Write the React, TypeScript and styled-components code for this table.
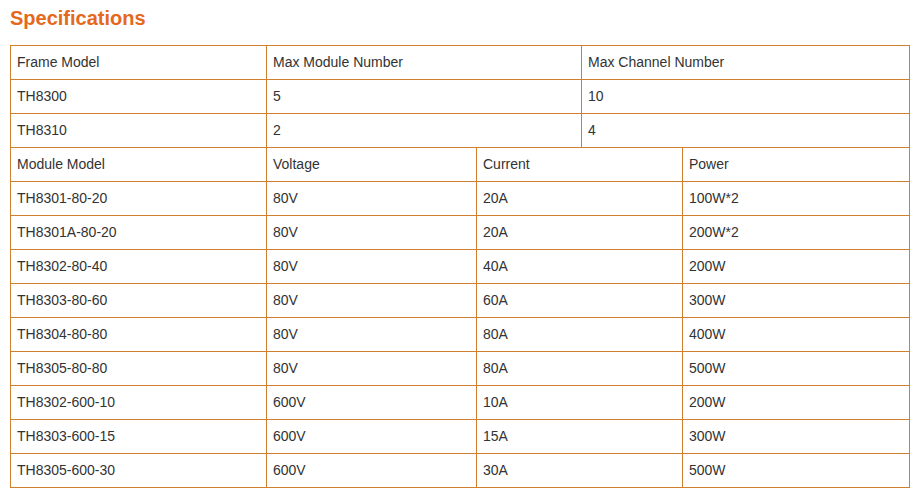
import styled, { createGlobalStyle } from 'styled-components';

const GlobalStyle = createGlobalStyle`
  body {
    margin: 0;
    background: #ffffff;
    font-family: "Liberation Sans", Arial, sans-serif;
  }
`;

const Page = styled.section`
  padding: 7px 11px 0 10px;
  width: 900px;
`;

const Title = styled.h2`
  margin: 0 0 15px 0;
  font-size: 20px;
  line-height: 23px;
  font-weight: bold;
  color: #e5691d;
`;

const SpecTable = styled.table<{ $top?: boolean }>`
  width: 900px;
  table-layout: fixed;
  border-collapse: collapse;
  border-top: ${(p) => (p.$top ? '1px solid #d07f2c' : 'none')};
`;

const Col = styled.col<{ $w?: number }>`
  width: ${(p) => (p.$w ? `${p.$w}px` : 'auto')};
`;

const Cell = styled.td`
  height: 31px;
  padding: 0 0 2px 6px;
  border: 1px solid #d07f2c;
  border-top: none;
  font-size: 14px;
  color: #333333;
  vertical-align: middle;
  white-space: nowrap;
`;

const frames = [
  ['Frame Model', 'Max Module Number', 'Max Channel Number'],
  ['TH8300', '5', '10'],
  ['TH8310', '2', '4'],
];

const modules = [
  ['Module Model', 'Voltage', 'Current', 'Power'],
  ['TH8301-80-20', '80V', '20A', '100W*2'],
  ['TH8301A-80-20', '80V', '20A', '200W*2'],
  ['TH8302-80-40', '80V', '40A', '200W'],
  ['TH8303-80-60', '80V', '60A', '300W'],
  ['TH8304-80-80', '80V', '80A', '400W'],
  ['TH8305-80-80', '80V', '80A', '500W'],
  ['TH8302-600-10', '600V', '10A', '200W'],
  ['TH8303-600-15', '600V', '15A', '300W'],
  ['TH8305-600-30', '600V', '30A', '500W'],
];

const App = () => {
  return (
    <>
      <GlobalStyle />
      <Page>
        <Title>Specifications</Title>
        <SpecTable $top>
          <colgroup>
            <Col $w={256} />
            <Col $w={315} />
            <Col />
          </colgroup>
          <tbody>
            {frames.map((row) => (
              <tr key={row[0]}>
                {row.map((c, i) => (
                  <Cell key={i}>{c}</Cell>
                ))}
              </tr>
            ))}
          </tbody>
        </SpecTable>
        <SpecTable>
          <colgroup>
            <Col $w={256} />
            <Col $w={210} />
            <Col $w={206} />
            <Col />
          </colgroup>
          <tbody>
            {modules.map((row) => (
              <tr key={row[0]}>
                {row.map((c, i) => (
                  <Cell key={i}>{c}</Cell>
                ))}
              </tr>
            ))}
          </tbody>
        </SpecTable>
      </Page>
    </>
  );
};

export default App;
